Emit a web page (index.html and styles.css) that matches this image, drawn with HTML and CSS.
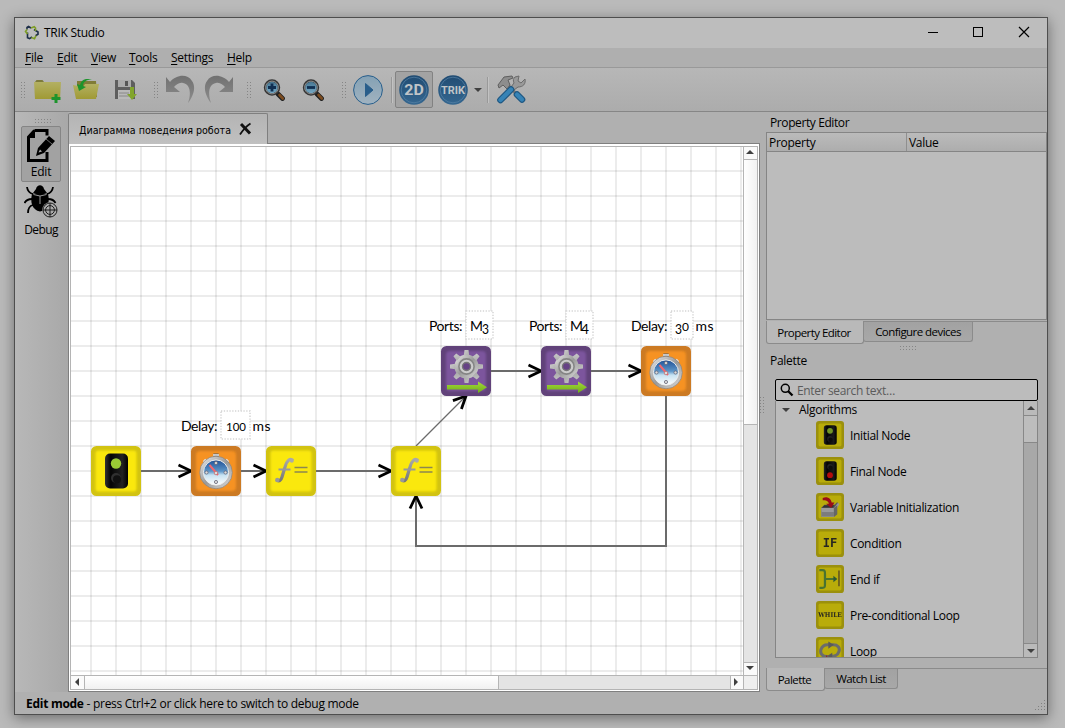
FILE: index.html
```html
<!DOCTYPE html>
<html lang="en">
<head>
<meta charset="utf-8">
<title>TRIK Studio</title>
<link rel="stylesheet" href="styles.css">
</head>
<body>
<svg width="0" height="0" class="defs">
  <defs>
    <linearGradient id="metal" x1="0" y1="0" x2="1" y2="1"><stop offset="0" stop-color="#eee"/><stop offset=".5" stop-color="#999"/><stop offset="1" stop-color="#ddd"/></linearGradient>
    <linearGradient id="fmetal" x1="0" y1="0" x2="0" y2="1"><stop offset="0" stop-color="#a9a9a9"/><stop offset="1" stop-color="#777"/></linearGradient>
    <linearGradient id="dial" x1="0" y1="0" x2="0" y2="1"><stop offset="0" stop-color="#1e4f96"/><stop offset=".45" stop-color="#5d96c8"/><stop offset=".6" stop-color="#c7e2f1"/><stop offset="1" stop-color="#fff"/></linearGradient>
    <linearGradient id="lamp" x1="0" y1="0" x2="1" y2="0"><stop offset="0" stop-color="#333"/><stop offset=".25" stop-color="#050505"/><stop offset=".75" stop-color="#222"/><stop offset="1" stop-color="#000"/></linearGradient>
    <linearGradient id="green" x1="0" y1="0" x2="0" y2="1"><stop offset="0" stop-color="#a4d93a"/><stop offset="1" stop-color="#6fae16"/></linearGradient>
    <linearGradient id="navy" x1="0" y1="0" x2="0" y2="1"><stop offset="0" stop-color="#204b72"/><stop offset="1" stop-color="#356790"/></linearGradient>
    <linearGradient id="sky" x1="0" y1="0" x2="0" y2="1"><stop offset="0" stop-color="#84a1b4"/><stop offset="1" stop-color="#a1b3c0"/></linearGradient>
    <linearGradient id="folder" x1="0" y1="0" x2="0" y2="1"><stop offset="0" stop-color="#b3b062"/><stop offset="1" stop-color="#a09a35"/></linearGradient>
    <linearGradient id="curl" x1="0" y1="0" x2="0" y2="1"><stop offset="0" stop-color="#717171"/><stop offset="1" stop-color="#8c8c8c"/></linearGradient>
    <linearGradient id="lens" x1="0" y1="0" x2="0" y2="1"><stop offset="0" stop-color="#42708c"/><stop offset="1" stop-color="#7bb0cc"/></linearGradient>
    <filter id="soft"><feGaussianBlur stdDeviation="1.2"/></filter>
    <g id="tile-yellow"><rect width="50" height="50" rx="5.5" fill="#d2c312"/><rect x="4.500" y="4.500" width="41" height="41" rx="3" fill="#fae80b" filter="url(#soft)"/></g>
    <g id="tile-orange"><rect width="50" height="50" rx="5.500" fill="#cc7a23"/><rect x="5" y="5" width="40" height="40" rx="4" fill="#f69220" filter="url(#soft)"/></g>
    <g id="tile-purple"><rect width="50" height="50" rx="5.500" fill="#61427a"/><rect x="5" y="5" width="40" height="40" rx="4" fill="#7c549d" filter="url(#soft)"/></g>
    <g id="lampbox"><rect x="14" y="7.500" width="23" height="35" rx="5" fill="url(#lamp)"/></g>
    <g id="n-initial"><use href="#tile-yellow"/><use href="#lampbox"/><circle cx="25" cy="17.500" r="5.200" fill="#9acb35"/><circle cx="25" cy="32" r="5" fill="#303030"/><circle cx="26" cy="33.300" r="4" fill="#111"/></g>
    <g id="n-final"><use href="#tile-yellow"/><use href="#lampbox"/><circle cx="25" cy="17.500" r="5" fill="#303030"/><circle cx="26" cy="19" r="4" fill="#111"/><circle cx="25" cy="32.500" r="5.200" fill="#f01010"/></g>
    <g id="n-func"><use href="#tile-yellow"/>
      <path d="M27 14.500C24 11.500 20.500 15 19 21L16 31C15 34.500 13 36 10.500 33.500" fill="none" stroke="url(#fmetal)" stroke-width="3.200"/><circle cx="25.800" cy="14.800" r="2" fill="#aaa"/><circle cx="11.300" cy="34" r="2.200" fill="#999"/><path d="M12.500 23.500h12" stroke="#999" stroke-width="2"/>
      <path d="M28.500 21.500h13M28.500 26h13" stroke="#8c8750" stroke-width="1.600"/></g>
    <g id="n-delay"><use href="#tile-orange"/>
      <rect x="22" y="7.500" width="6" height="5" rx="1" fill="#555"/><path d="M22 9h6" stroke="#eee" stroke-width="1.500"/><path d="M13 14l3 3M37 14l-3 3" stroke="#eee" stroke-width="3.400"/>
      <circle cx="25" cy="26.500" r="16.300" fill="url(#metal)" stroke="#8b8177" stroke-width=".7"/><circle cx="25" cy="26.500" r="12.600" fill="url(#dial)" stroke="#eee" stroke-width="1"/>
      <g fill="#ddd" stroke="#667" stroke-width=".8"><circle cx="25" cy="17" r="1.600"/><circle cx="15.500" cy="26.500" r="1.600"/><circle cx="34.500" cy="26.500" r="1.600"/><circle cx="25" cy="36" r="1.600"/></g>
      <path d="M18.500 19L27 29" stroke="#f3656d" stroke-width="2"/><circle cx="25" cy="27" r="1.800" fill="#ddd" stroke="#b55" stroke-width=".6"/></g>
    <g id="n-motor"><use href="#tile-purple"/>
      <g fill="url(#metal)"><circle cx="25.500" cy="20.500" r="12"/>
        <g id="cog"><path d="M22.800 9.500L23.500 4h4l.7 5.500zM22.800 31.500L23.500 37h4l.7-5.500zM14.500 17.800L9 18.500v4l5.500.7zM36.500 17.800L42 18.500v4l-5.500.7z"/></g>
        <use href="#cog" transform="rotate(45 25.500 20.500)"/></g>
      <circle cx="25.500" cy="20.500" r="7.600" fill="#ccc" stroke="#858585" stroke-width="1.600"/><circle cx="25.500" cy="20.500" r="4" fill="#664285" stroke="#777" stroke-width="1.400"/>
      <path d="M6 39h31v-3.500l9 5.700-9 5.800v-3.500H6z" fill="url(#green)"/></g>
    <g id="n-var"><use href="#tile-yellow"/><path d="M9 27l6-6h18l5-5 2 4-3 7v11l-6 5H10z" fill="#777"/><path d="M32 27l7-9 3 1-5 9z" fill="#ccc"/><path d="M9 27h23v16H10z" fill="#d0d0d0"/><path d="M10 34h22v8H10z" fill="#a8a8a8"/><path d="M32 27l6-5v16l-6 5z" fill="#8a8a8a"/><path d="M11 26l4-4h18l-3 4z" fill="#444"/><path d="M12 9c7-4 15 0 16 8h5l-6 10-9-8h5c-1-5-5-7-11-6z" fill="#cf1220"/></g>
    <g id="n-if"><use href="#tile-yellow"/><text x="25" y="32.500" class="tile-word mono" font-size="22" textLength="26" lengthAdjust="spacingAndGlyphs">IF</text></g>
    <g id="n-while"><use href="#tile-yellow"/><text x="25" y="29" class="tile-word slab" font-size="11.500" textLength="42" lengthAdjust="spacingAndGlyphs">WHILE</text></g>
    <g id="n-endif"><use href="#tile-yellow"/><path d="M6 9h5c5 0 5 2 5 7v18c0 5 0 7-5 7H6M16 25h20" fill="none" stroke="#639b42" stroke-width="4"/><path d="M31 19l7 6-7 6z" fill="#407a43"/><path d="M41 10v28" stroke="#8e7a28" stroke-width="3"/></g>
    <g id="n-loop"><use href="#tile-yellow"/><path d="M22 35C10 36 7 28 9 22s8-9 15-8M28 14c12-1 15 6 13 12s-8 9-13 8" fill="none" stroke="#929292" stroke-width="5.500"/><path d="M22 8l10 6-10 7zM29 28l-9 6 9 6z" fill="#7b7b7b"/><path d="M19 33v9" stroke="#c33" stroke-width="2"/></g>
    <g id="magnifier"><path d="M15 15l4.500 4.500" stroke="#202020" stroke-width="4.800" stroke-linecap="round"/><path d="M16.500 16l3.300 3.500" stroke="#7c4c20" stroke-width="2.600" stroke-linecap="round"/><circle cx="9" cy="8.500" r="7" fill="url(#lens)" stroke="#353535" stroke-width="2.400"/><circle cx="9" cy="8.500" r="6.400" fill="none" stroke="#999" stroke-width=".9"/></g>
    <path id="chevron" d="M-12.500-6L0 0l-12.500 6" fill="none" stroke="#000" stroke-width="2.800"/>
  </defs>
</svg>

<main class="window">
  <header class="titlebar">
    <svg class="logo" width="16" height="16" viewBox="0 0 16 16" fill="none" stroke-width="1.600"><path d="M3 4.500V2.500l1.500-1L7 3M3.500 7.500v5.300l2 .8L8 12M10 4.500l4 2.500v2.300l-2.500 1.500" stroke="#1d2e48"/><path d="M3 4.500L1.500 6.500 3.500 9M7 3l3.300-1.200L11.500 3v3M7.500 12.500l3 1.300L12 10.500" stroke="#7d9d26"/></svg>
    <span class="title">TRIK Studio</span>
    <svg class="winctl" width="104" height="12" viewBox="0 0 104 12" fill="none" stroke="#000"><path d="M1 6.500h10" /><rect x="46.500" y="1.500" width="9" height="9"/><path d="M92 1l10 10M102 1L92 11" stroke-width="1.200"/></svg>
  </header>

  <nav class="menubar"><span class="m1"><u>F</u>ile</span><span class="m2"><u>E</u>dit</span><span class="m3"><u>V</u>iew</span><span class="m4"><u>T</u>ools</span><span class="m5"><u>S</u>ettings</span><span class="m6"><u>H</u>elp</span></nav>

  <div class="toolbar">
    <i class="grip"></i>
    <svg class="t-new" width="27" height="26" viewBox="0 0 27 26"><path d="M1 4l1.500-2h6L10 4h14v15H1z" fill="#7d7b3c"/><path d="M0 4h27l-1 17H1z" fill="url(#folder)"/><path d="M22 16v9M17.500 20.500h9" stroke="#1d942c" stroke-width="3"/></svg>
    <svg class="t-open" width="26" height="22" viewBox="0 0 26 22"><path d="M4 2h19l1 16H4z" fill="#807c37"/><path d="M12 5h14l-3 15H3L0 6l10 2z" fill="url(#folder)"/><path d="M19 0C12-1 8 1 7 6L4 5l2 7 7-4-3-1c0-4 3-6 9-7z" fill="#1d942c"/></svg>
    <svg class="t-save" width="22" height="22" viewBox="0 0 22 22"><path d="M0 1h17l3 3v16H0z" fill="#5e5e5e"/><path d="M3 1h13v7H3z" fill="#aaa"/><path d="M10 2h3v5h-3z" fill="#555"/><path d="M3 11h14v9H3z" fill="#b9b9b9"/><path d="M4 14h10M4 17h10" stroke="#888"/><path d="M15 8h4v7h3l-5 6-5-6h3z" fill="#82a52c"/></svg>
    <i class="grip g2"></i>
    <svg class="t-undo" width="30" height="29" viewBox="0 0 30 29"><path id="undo" d="M1 2l4 5C11 0 22-2 27 6c5 7 0 17-4 22 3-8 3-19-5-20-4-1-7 2-9 4l6 5H1z" fill="url(#curl)"/></svg>
    <svg class="t-redo" width="30" height="29" viewBox="0 0 30 29"><use href="#undo" transform="matrix(-1 0 0 1 30 0)"/></svg>
    <i class="grip g3"></i>
    <svg class="t-zin" width="24" height="22" viewBox="0 0 24 22"><use href="#magnifier"/><path d="M9 4.500v8M5 8.500h8" stroke="#102f52" stroke-width="2.800"/></svg>
    <svg class="t-zout" width="24" height="22" viewBox="0 0 24 22"><use href="#magnifier"/><path d="M5 8.500h8" stroke="#102f52" stroke-width="2.800"/></svg>
    <i class="grip g4"></i>
    <svg class="t-play" width="30" height="30" viewBox="0 0 30 30"><circle cx="15" cy="15" r="14.400" fill="url(#sky)" stroke="#285e8b" stroke-width="1"/><path d="M12.500 8.500l7.500 6.500-7.500 6.500z" fill="#285e8b" stroke="#285e8b"/></svg>
    <i class="sep"></i>
    <span class="pressed"><svg width="30" height="30" viewBox="0 0 30 30"><circle cx="15" cy="15" r="14.800" fill="url(#navy)"/><circle cx="15" cy="15" r="12.800" fill="none" stroke="#5782a6" stroke-width=".7"/><text x="15" y="20.300" class="badge" font-size="15" textLength="19.500" lengthAdjust="spacingAndGlyphs">2D</text></svg></span>
    <svg class="t-trik" width="30" height="30" viewBox="0 0 30 30"><circle cx="15" cy="15" r="14.800" fill="url(#navy)"/><circle cx="15" cy="15" r="12.800" fill="none" stroke="#5782a6" stroke-width=".7"/><text x="15" y="18.500" class="badge" font-size="10" textLength="24" lengthAdjust="spacingAndGlyphs">TRIK</text></svg>
    <i class="arr down t-drop"></i>
    <i class="sep s2"></i>
    <svg class="t-tools" width="30" height="30" viewBox="0 0 30 30"><path d="M12 10l10 11" stroke="#777" stroke-width="3"/><path d="M2 10L8 2l8-1 1 2-5 2 2 5-3 4-4-4-4 3z" fill="#8d8d8d" stroke="#5f5f5f"/><path d="M19 2l4-1-1 5 3 2 4-4c1 5-2 8-7 8l-4 3-3-3 3-4c-1-3-1-4 1-6z" fill="#999" stroke="#6b6b6b"/><path d="M4.500 25L15 14.500" stroke="#1e5782" stroke-width="6.600" stroke-linecap="round"/><path d="M4.500 25L15 14.500" stroke="#3683b6" stroke-width="4.300" stroke-linecap="round"/><path d="M21 19.500l5 5" stroke="#1e5782" stroke-width="6.600" stroke-linecap="round"/><path d="M21 19.500l5 5" stroke="#3683b6" stroke-width="4.300" stroke-linecap="round"/></svg>
  </div>

  <div class="body">
    <aside class="modes">
      <i class="hgrip"></i>
      <div class="mode active">
        <svg width="30" height="34" viewBox="0 0 30 34"><path d="M8.500 1.500H21v5M21 23v8.500H2.500V8L8.500 1.500" fill="none" stroke="#000" stroke-width="3"/><path d="M1 9l8-8v8z"/><path d="M10 27l2-8L23 7l6 5-11 12z"/><path d="M12.500 23.500l1.500-3 2 2z" fill="#aaa"/><path d="M20 10l6 5" stroke="#888" stroke-width=".8"/></svg>
        <span>Edit</span>
      </div>
      <div class="mode debug">
        <svg width="34" height="34" viewBox="0 0 34 34"><path d="M12 4c1-5 7-5 8 0l3 4H9z"/><path d="M8 9q8-3 16 0c2 8 0 16-8 17.500C8 25 6 17 8 9z"/><path d="M9 9C5 8 3.500 6 3 2M23 9c4-1 5.500-3 6-7M8 14c-4 0-6 1-7.500 4M24 14c4 0 6 1 7.500 4M9 20c-4 1-5 4-5 8" fill="none" stroke="#000" stroke-width="1.800"/><path d="M16 11v8M9.500 9.500l6.500 1.500 6.500-1.500" stroke="#999" fill="none"/><circle cx="26" cy="25" r="7.800" fill="#aaa"/><g fill="none" stroke="#111" stroke-width=".9"><circle cx="26" cy="25" r="7"/><circle cx="26" cy="25" r="4.400"/><path d="M19 25h14M26 18v14"/></g></svg>
        <span>Debug</span>
      </div>
    </aside>

    <section class="editor">
      <div class="tabs"><div class="doctab"><svg width="154" height="18" viewBox="0 0 154 18"><text x="0" y="13" textLength="152" lengthAdjust="spacingAndGlyphs">Диаграмма поведения робота</text></svg><svg class="close" width="14" height="14" viewBox="0 0 14 14" fill="none" stroke="#111"><path d="M2 2l9 9.500" stroke-width="3"/><path d="M11.500 1.500Q6 5 1 12.500" stroke-width="1.800"/></svg></div><div class="tabrest"></div></div>
      <div class="frame">
        <svg class="canvas" width="672" height="529" viewBox="71 146 672 529">
          <defs><pattern id="grid" x="90" y="145" width="25" height="25" patternUnits="userSpaceOnUse"><path d="M0 1h25" stroke="#000" stroke-opacity=".075" stroke-width="2"/><path d="M1 0v25" stroke="#000" stroke-opacity=".075" stroke-width="2"/></pattern></defs>
          <rect x="71" y="146" width="672" height="529" fill="#fff"/><rect x="71" y="146" width="672" height="529" fill="url(#grid)"/>
          <g fill="none" stroke="#6b6b6b" stroke-width="2"><path d="M141 471h50M241 471h25M316 471h75M491 371h50M591 371h50M666 396v150H416v-50"/><path d="M416 446l50-50" stroke-width="1.200"/></g>
          <use href="#chevron" x="191" y="471"/><use href="#chevron" x="266" y="471"/><use href="#chevron" x="391" y="471"/><use href="#chevron" x="541" y="371"/><use href="#chevron" x="641" y="371"/>
          <use href="#chevron" transform="translate(466 396) rotate(-45)"/><use href="#chevron" transform="translate(416 496) rotate(-90)"/>
          <use href="#n-initial" x="91" y="446"/><use href="#n-delay" x="191" y="446"/><use href="#n-func" x="266" y="446"/><use href="#n-func" x="391" y="446"/>
          <use href="#n-motor" x="441" y="346"/><use href="#n-motor" x="541" y="346"/><use href="#n-delay" x="641" y="346"/>
          <g fill="#fff" stroke="#d5d5d5" stroke-width="1.500" stroke-dasharray="1.300 1.500"><rect x="221" y="411" width="29" height="28"/><rect x="466" y="311" width="27" height="28"/><rect x="566" y="311" width="27" height="28"/><rect x="671" y="311" width="22" height="28"/></g>
          <g class="label">
            <text x="181" y="431" textLength="36.500">Delay:</text><text x="226" y="431" font-size="12" textLength="20" lengthAdjust="spacingAndGlyphs">100</text><text x="252.500" y="431" textLength="18">ms</text>
            <text x="429" y="331" textLength="33.500">Ports:</text><text x="470" y="331">M</text><text x="482" y="334" textLength="7" lengthAdjust="spacingAndGlyphs">3</text>
            <text x="529" y="331" textLength="33.500">Ports:</text><text x="570" y="331">M</text><text x="581" y="334" textLength="8" lengthAdjust="spacingAndGlyphs">4</text>
            <text x="631" y="331" textLength="36.500">Delay:</text><text x="675" y="334" textLength="7" lengthAdjust="spacingAndGlyphs">3</text><text x="682" y="331" font-size="12">0</text><text x="695.500" y="331" textLength="18">ms</text>
          </g>
        </svg>
        <div class="vbar"><b><i class="arr up"></i></b><span></span><b class="end"><i class="arr down"></i></b></div>
        <div class="hbar"><b><i class="arr left"></i></b><span></span><b class="end"><i class="arr right"></i></b></div>
        <div class="corner"></div>
      </div>
    </section>

    <aside class="docks">
      <i class="sidegrip"></i>
      <div class="stack">
        <h2>Property Editor</h2>
        <div class="table"><div class="thead"><span>Property</span><span>Value</span></div></div>
        <div class="docktabs"><span class="on pe">Property Editor</span><span class="cd">Configure devices</span></div>
        <i class="hgrip mid"></i>
        <h2 class="pal">Palette</h2>
        <div class="search"><svg width="14" height="14" viewBox="0 0 14 14" fill="none" stroke="#000"><circle cx="5.300" cy="5.300" r="4" stroke-width="1.500"/><path d="M8 8l4.500 4.500" stroke-width="2.300"/></svg><span>Enter search text…</span></div>
        <div class="list">
          <div class="tree">
            <div class="group"><i class="arr down"></i><span>Algorithms</span></div>
            <div class="item"><svg viewBox="0 0 50 50"><use href="#n-initial"/></svg><span>Initial Node</span></div>
            <div class="item"><svg viewBox="0 0 50 50"><use href="#n-final"/></svg><span>Final Node</span></div>
            <div class="item"><svg viewBox="0 0 50 50"><use href="#n-var"/></svg><span>Variable Initialization</span></div>
            <div class="item"><svg viewBox="0 0 50 50"><use href="#n-if"/></svg><span>Condition</span></div>
            <div class="item"><svg viewBox="0 0 50 50"><use href="#n-endif"/></svg><span>End if</span></div>
            <div class="item"><svg viewBox="0 0 50 50"><use href="#n-while"/></svg><span>Pre-conditional Loop</span></div>
            <div class="item"><svg viewBox="0 0 50 50"><use href="#n-loop"/></svg><span>Loop</span></div>
          </div>
          <div class="lbar"><b><i class="arr up"></i></b><span></span><b class="end"><i class="arr down"></i></b></div>
        </div>
        <div class="docktabs low"><span class="on p2">Palette</span><span class="wl">Watch List</span></div>
      </div>
    </aside>
  </div>

  <footer class="status"><span><strong>Edit mode</strong> - press Ctrl+2 or click here to switch to debug mode</span>
    <svg width="12" height="12" viewBox="0 0 12 12" fill="#808080"><path d="M9 0h1v1H9zM6 3h1v1H6zM9 3h1v1H9zM3 6h1v1H3zM6 6h1v1H6zM9 6h1v1H9zM0 9h1v1H0zM3 9h1v1H3zM6 9h1v1H6zM9 9h1v1H9z"/></svg>
  </footer>
</main>
</body>
</html>
```
FILE: styles.css
```css
* { box-sizing: border-box; }
body { margin: 0; width: 1065px; height: 728px; padding: 17px 0 0 14px; overflow: hidden; background: #bababa; font: 12px/16px "Open Sans", "Noto Sans", sans-serif; letter-spacing: -0.28px; color: #000; }
svg { display: block; flex: none; }
.defs { position: absolute; }
i { display: block; flex: none; }
.window { width: 1034px; height: 698px; border: 1px solid #4e4e4e; background: #b0b0b0; box-shadow: 0 3px 13px rgba(0,0,0,.42); display: flex; flex-direction: column; }

.titlebar { height: 30px; background: #bdbdbd; display: flex; align-items: center; padding: 0 16px 0 9px; }
.title { margin-left: 4px; flex: 1; }
.winctl { margin-bottom: 2px; }
.menubar { height: 20px; background: #afafaf; border-bottom: 1px solid #999; display: flex; padding-left: 10px; line-height: 20px; }
.menubar u { text-underline-offset: 2px; }
.m1 { width: 32px; } .m2 { width: 34px; } .m3 { width: 38px; } .m4 { width: 42px; } .m5 { width: 56px; }

.toolbar { height: 44px; border-bottom: 1px solid #868686; background: linear-gradient(#b7b7b7, #acacac); display: flex; align-items: center; padding-left: 5px; }
.grip { width: 5px; height: 17px; background: radial-gradient(circle, #858585 .7px, transparent .9px) 0 0 / 3px 3px; }
.g2 { margin-left: 16px; } .g3 { margin-left: 12px; } .g4 { margin-left: 15px; }
.t-new { margin: 2px 0 0 9px; }
.t-open { margin-left: 12px; }
.t-save { margin-left: 16px; }
.t-undo { margin-left: 7px; }
.t-redo { margin-left: 9px; }
.t-zin { margin-left: 12px; }
.t-zout { margin-left: 15px; }
.t-play { margin-left: 7px; }
.sep { width: 2px; height: 26px; margin: 0 3px 0 8px; border-left: 1px solid #999; border-right: 1px solid #c2c2c2; }
.pressed { width: 38px; height: 37px; border: 1px solid #828282; border-radius: 2px; background: #a3a3a3; display: grid; place-items: center; margin-left: -1px; }
.t-trik { margin-left: 5px; }
.t-drop { margin-left: 6px; }
.s2 { margin: 0 7px 0 5px; }
.badge { font-family: Roboto, sans-serif; font-weight: 700; fill: #bfc4c8; text-anchor: middle; letter-spacing: 0; }
.arr { width: 0; height: 0; border: 4px solid transparent; }
.down { border-top-color: #404040; border-bottom: 0; }
.up { border-bottom-color: #404040; border-top: 0; }
.left { border-right-color: #404040; border-left: 0; }
.right { border-left-color: #404040; border-right: 0; }

.body { flex: 1; display: grid; grid-template-columns: 53px 692px 287px; min-height: 0; }
.modes { background: linear-gradient(90deg, #b8b8b8, #a8a8a8); display: flex; flex-direction: column; align-items: center; padding: 6px 1px 0 0; }
.hgrip { width: 17px; height: 5px; background: radial-gradient(circle, #858585 .7px, transparent .9px) 0 0 / 3px 3px; }
.modes .hgrip { margin-left: 2px; }
.mode { width: 40px; height: 56px; margin-top: 3px; border: 1px solid transparent; display: flex; flex-direction: column; align-items: center; letter-spacing: -.6px; }
.active { background: #a2a2a2; border-color: #858585; border-radius: 2px; letter-spacing: -.2px; }
.active svg { margin-top: 2px; }
.active span { margin-top: 1px; }
.debug svg { margin-top: -1px; }
.debug span { margin-top: 3px; }

.editor { display: flex; flex-direction: column; padding-top: 1px; }
.tabs { height: 31px; display: flex; }
.doctab { width: 200px; border: 1px solid #7f7f7f; border-bottom: 0; border-radius: 2px 2px 0 0; background: linear-gradient(#b4b4b4, #c0c0c0); display: flex; align-items: center; padding: 2px 0 0 10px; }
.doctab text { font: 11px "DejaVu Sans", sans-serif; letter-spacing: 0; }
.close { margin: -2px 0 0 6px; }
.tabrest { flex: 1; border-bottom: 1px solid #7f7f7f; }
.frame { height: 548px; border: 1px solid #7f7f7f; border-top: 0; background: #fff; display: grid; grid-template: 529px 14px / 672px 14px; outline: 1px solid #b4b4b4; outline-offset: -3px; padding: 2px; }
.vbar, .hbar, .lbar { display: flex; background: #e4e4e4; }
.vbar, .lbar { flex-direction: column; border-left: 1px solid #b5b5b5; }
.hbar { border-top: 1px solid #b5b5b5; }
.vbar b, .hbar b, .lbar b { width: 13px; height: 13px; background: #fafafa; display: grid; place-items: center; flex: none; }
.vbar b, .hbar b { padding: 0 2px 2px 0; }
.vbar span { height: 266px; border: solid #b5b5b5; border-width: 1px 0; background: linear-gradient(90deg,#fff,#f1f1f1); }
.hbar span { width: 415px; border: solid #b5b5b5; border-width: 0 1px; background: linear-gradient(#fff,#f1f1f1); }
.vbar .end { margin-top: auto; border-top: 1px solid #b5b5b5; }
.hbar .end { margin-left: auto; border-left: 1px solid #b5b5b5; }
.corner { background: #efefef; border: solid #b5b5b5; border-width: 1px 0 0 1px; }
.label { font: 14px "Lato", sans-serif; letter-spacing: 0; }
.tile-word { font-weight: 700; text-anchor: middle; fill: #35352c; letter-spacing: 0; }
.mono { font-family: "DejaVu Sans Mono", monospace; }
.slab { font-family: "DejaVu Serif", serif; }

.docks { display: flex; }
.sidegrip { width: 6px; height: 17px; margin-top: 284px; background: radial-gradient(circle, #858585 .7px, transparent .9px) 2px 0 / 3px 3px; }
.stack { width: 281px; }
h2 { margin: 0; height: 20px; padding: 3px 0 0 4px; font-size: 12px; font-weight: 400; letter-spacing: -.4px; }
.table { height: 188px; border: 1px solid #858585; background: #bcbcbc; }
.thead { height: 19px; border-bottom: 1px solid #858585; background: linear-gradient(#bbb, #adadad); display: flex; line-height: 20px; }
.thead span { width: 139px; padding-left: 2px; }
.thead span + span { border-left: 1px solid #8f8f8f; }
.docktabs { height: 23px; margin-top: 1px; display: flex; align-items: flex-start; border-top: 1px solid #8b8b8b; font-size: 11.5px; letter-spacing: -.55px; }
.docktabs span { height: 20px; line-height: 20px; text-align: center; border: 1px solid #8b8b8b; border-top: 0; border-radius: 0 0 3px 3px; background: linear-gradient(#a2a2a2, #a8a8a8); margin-left: -1px; }
.docktabs .on { height: 23px; line-height: 24px; margin: -1px 0 0; padding-right: 2px; background: #b9b9b9; }
.pe { width: 98px; } .cd { width: 110px; } .p2 { width: 59px; } .wl { width: 74px; }
.mid { margin: 1px 0 0 133px; }
.pal { height: 29px; padding-top: 3px; letter-spacing: -.3px; }
.search { width: 263px; height: 22px; margin-left: 9px; border: 1px solid #000; border-radius: 2px; background: #bcbcbc; display: flex; align-items: center; padding-left: 4px; color: #5b5b5b; }
.search span { margin-left: 3px; padding-top: 2px; letter-spacing: -.35px; }
.list { width: 263px; height: 257px; margin-left: 9px; border: 1px solid #858585; border-top: 0; background: #bcbcbc; display: flex; overflow: hidden; }
.tree { width: 247px; padding-top: 1px; }
.group { height: 15px; display: flex; align-items: center; padding-left: 6px; }
.group span { margin-left: 9px; padding-top: 1px; }
.item { height: 36px; padding-left: 40px; display: flex; align-items: center; }
.item svg { width: 28px; height: 28px; filter: brightness(.74); }
.item span { margin-left: 6px; padding-top: 2px; letter-spacing: -.33px; }
.lbar { flex: 1; background: #a8a8a8; border-left-color: #888; }
.lbar b { background: #bababa; width: auto; height: 14px; }
.lbar span { height: 28px; border: solid #888; border-width: 1px 0; background: #bdbdbd; }
.lbar .end { margin-top: auto; border-top: 1px solid #888; }
.low { margin-top: 10px; }

.status { height: 22px; display: flex; justify-content: space-between; align-items: center; padding: 2px 0 0 11px; }
.status svg { margin-top: 4px; }
```
